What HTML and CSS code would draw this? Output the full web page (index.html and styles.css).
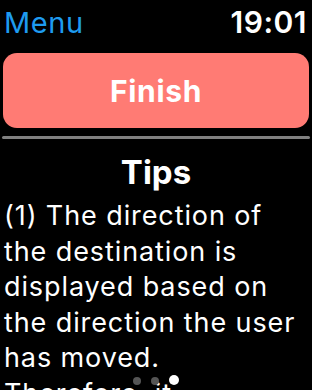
FILE: index.html
```html
<!DOCTYPE html>
<html>
	<head>
		<meta charset="utf-8" />
		<meta name="viewport" content="width=device-width, initial-scale=1.0" />
		<title>Tips</title>
		<link rel="stylesheet" href="styles.css">
	</head>
	<body>
		<div class="screen">
			<div class="status-bar">
				<span class="menu">Menu</span>
				<span class="clock">19:01</span>
			</div>

			<button class="finish">Finish</button>

			<div class="divider"></div>

			<h1>Tips</h1>
			<p class="tip">(1) The direction of<br>the destination is<br>displayed based on<br>the direction the user<br>has moved.<br>Therefore, it</p>

			<div class="pager">
				<span class="dot"></span>
				<span class="dot"></span>
				<span class="dot active"></span>
			</div>
		</div>
	</body>
</html>
```

FILE: styles.css
```css
body {
	margin: 0;
	background: #000;
	font-family: Inter, 'Noto Sans', sans-serif;
	color: #fff;
}

.screen {
	position: relative;
	width: 312px;
	height: 390px;
	overflow: hidden;
	padding: 0 2px;
	box-sizing: border-box;
}

.status-bar {
	display: flex;
	justify-content: space-between;
	align-items: center;
	height: 44px;
	padding: 0 3px 0 2px;
}

.menu {
	color: #1e9bf0;
	font-size: 29px;
	letter-spacing: 0.6px;
}

.clock {
	font-size: 30px;
	font-weight: 600;
	letter-spacing: 0.5px;
}

/* Finish button */
.finish {
	display: block;
	width: 306px;
	height: 75px;
	margin: 9px 0 0 1px;
	border: none;
	border-radius: 14px;
	background: #ff7b74;
	color: #fff;
	font-family: inherit;
	font-size: 30px;
	font-weight: 700;
	letter-spacing: 0.7px;
}

.divider {
	height: 3px;
	margin-top: 8px;
	border-radius: 2px;
	background: #808080;
}

h1 {
	margin: 12px 0 0;
	text-align: center;
	font-size: 33px;
	font-weight: 700;
	line-height: 42px;
}

.tip {
	margin: 5px 0 0;
	padding-left: 2px;
	font-size: 27px;
	line-height: 35.5px;
	letter-spacing: 0.9px;
	white-space: nowrap;
}

/* Page dots */
.pager {
	position: absolute;
	left: 133px;
	top: 377px;
	display: flex;
	align-items: center;
	gap: 10px;
}

.dot {
	width: 8px;
	height: 8px;
	border-radius: 50%;
	background: #555;
}

.dot.active {
	width: 10px;
	height: 10px;
	margin-top: -3px;
	background: #fff;
}
```
